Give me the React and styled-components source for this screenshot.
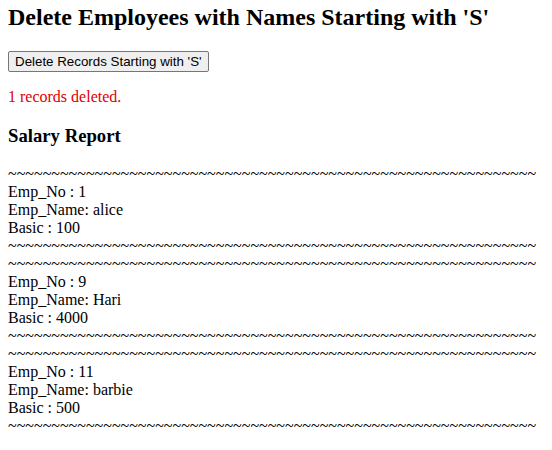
import React from 'react';
import styled, { createGlobalStyle } from 'styled-components';

const GlobalStyle = createGlobalStyle`
    body {
        margin:4px 8px 8px;
        font-family:"Liberation Serif", "Times New Roman", serif;
        font-size:16px;
        color:#000;
        background:#fff;
    }
`;

const records = [
    { no: 1, name: 'alice', basic: 100 },
    { no: 9, name: 'Hari', basic: 4000 },
    { no: 11, name: 'barbie', basic: 500 },
];

const LINE = '~'.repeat(61);

function App() {
    return (
        <>
            <GlobalStyle />
            <Title>Delete Employees with Names Starting with 'S'</Title>
            <DeleteButton type="button">Delete Records Starting with 'S'</DeleteButton>
            <Message>1 records deleted.</Message>
            <SubTitle>Salary Report</SubTitle>
            <Report>
                {records.map(r => (
                    <Record key={r.no}>
                        <Line>{LINE}</Line>
                        <Line>Emp_No : {r.no}</Line>
                        <Line>Emp_Name: {r.name}</Line>
                        <Line>Basic : {r.basic}</Line>
                        <Line>{LINE}</Line>
                    </Record>
                ))}
            </Report>
        </>
    );
}

const Title = styled.h2`
    font-size:1.5em;
    font-weight:bold;
    margin:0 0 0.83em;
`;
const DeleteButton = styled.button`
    font-family:"Liberation Sans", Arial, sans-serif;
    font-size:13.333px;
    color:#000;
    background:#efefef;
    border:1px solid #767676;
    border-radius:2px;
    padding:2px 6px;
    margin:0;
`;
const Message = styled.p`
    color:#e00000;
    margin:1em 0;
`;
const SubTitle = styled.h3`
    font-size:1.17em;
    font-weight:bold;
    margin:1em 0;
`;
const Report = styled.div``;
const Record = styled.div``;
const Line = styled.div`
    white-space:nowrap;
`;

export default App;
